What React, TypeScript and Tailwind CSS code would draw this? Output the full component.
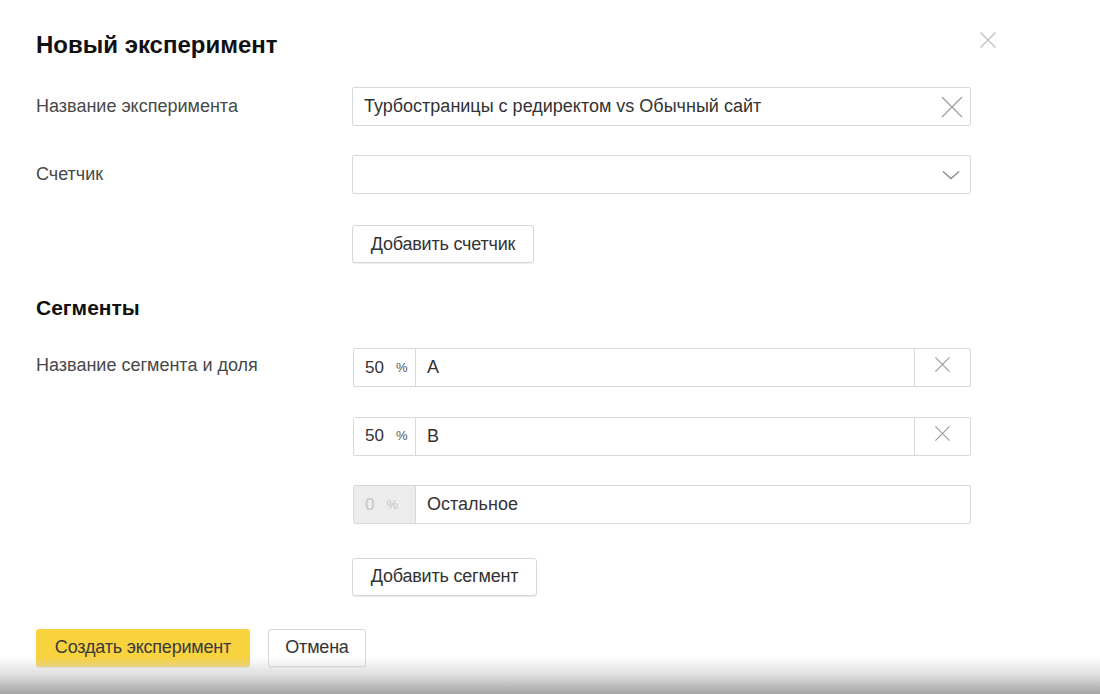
import React from "react";

function CrossIcon({ size, stroke = "#a6a6a6", width = 1.5 }: { size: number; stroke?: string; width?: number }) {
  return (
    <svg width={size} height={size} viewBox="0 0 24 24" fill="none">
      <path d="M2 2L22 22M22 2L2 22" stroke={stroke} strokeWidth={width} />
    </svg>
  );
}

function Chevron() {
  return (
    <svg width="18" height="10" viewBox="0 0 18 10" fill="none">
      <path d="M1 1.5L9 8.5L17 1.5" stroke="#8c8c8c" strokeWidth="1.4" />
    </svg>
  );
}

function Button({ children, className = "" }: { children: React.ReactNode; className?: string }) {
  return (
    <button
      type="button"
      className={`h-[38px] rounded-[3px] border border-[#d6d6d6] bg-white text-[18px] tracking-[-0.2px] text-[#333] shadow-[0_1px_1px_rgba(0,0,0,0.08)] ${className}`}
    >
      {children}
    </button>
  );
}

function SegmentRow({ share, name, removable = true, disabled = false }: { share: string; name: string; removable?: boolean; disabled?: boolean }) {
  return (
    <div className="flex h-[39px] w-[618px] border border-[#d9d9d9] rounded-[2px] bg-white">
      <div
        className={`flex w-[62px] items-center gap-[12px] border-r border-[#d9d9d9] pl-[11px] ${
          disabled ? "bg-[#ececec] text-[#c4c4c4]" : "text-[#333]"
        }`}
      >
        <span className="text-[17px]">{share}</span>
        <span className={`text-[13px] ${disabled ? "text-[#c4c4c4]" : "text-[#555]"}`}>%</span>
      </div>
      <div className="flex flex-1 items-center pl-[11px] text-[18px] text-[#333]">{name}</div>
      {removable ? (
        <div className="flex w-[56px] items-center justify-center border-l border-[#d9d9d9] pb-[6px]">
          <CrossIcon size={17} stroke="#9d9d9d" width={1.7} />
        </div>
      ) : null}
    </div>
  );
}

export default function App() {
  return (
    <div
      className="relative h-[694px] w-[1100px] overflow-hidden bg-white text-[#333]"
      style={{ fontFamily: '"Liberation Sans", Arial, sans-serif' }}
    >
      <div className="absolute right-[103px] top-[31px]">
        <CrossIcon size={18} stroke="#bdbdbd" width={1.6} />
      </div>

      <div className="flex flex-col pl-[36px] pt-[30px]">
        <h1 className="text-[24px] font-bold leading-[30px] text-[#111]">Новый эксперимент</h1>

        <div className="mt-[27px] flex items-center">
          <div className="w-[316px] text-[18px] text-[#484848]">Название эксперимента</div>
          <div className="flex h-[39px] w-[619px] items-center justify-between border border-[#d9d9d9] rounded-[2px] pl-[11px] pr-[6px]">
            <span className="text-[18px] text-[#333]">Турбостраницы с редиректом vs Обычный сайт</span>
            <CrossIcon size={24} stroke="#a9a9a9" width={1.6} />
          </div>
        </div>

        <div className="mt-[29px] flex items-start">
          <div className="w-[316px] pt-[6px] text-[18px] text-[#484848]">Счетчик</div>
          <div className="flex h-[39px] w-[619px] items-center justify-end border border-[#d9d9d9] rounded-[2px] pr-[10px]">
            <Chevron />
          </div>
        </div>

        <div className="mt-[31px] pl-[316px]">
          <Button className="w-[182px]">Добавить счетчик</Button>
        </div>

        <h2 className="mt-[31px] text-[21px] font-bold leading-[28px] text-[#111]">Сегменты</h2>

        <div className="mt-[26px] flex items-start">
          <div className="w-[317px] pt-[4px] text-[18px] text-[#484848]">Название сегмента и доля</div>
          <div className="flex flex-col gap-[29.5px]">
            <SegmentRow share="50" name="A" />
            <SegmentRow share="50" name="B" />
            <SegmentRow share="0" name="Остальное" removable={false} disabled />
            <div className="mt-[4px] -ml-[1px]">
              <Button className="w-[185px]">Добавить сегмент</Button>
            </div>
          </div>
        </div>

        <div className="mt-[33px] flex gap-[18px]">
          <button
            type="button"
            className="h-[38px] w-[214px] rounded-[3px] bg-[#f8d23f] text-[18px] tracking-[-0.2px] text-[#3a3a3a] shadow-[0_1px_1px_rgba(0,0,0,0.1)]"
          >
            Создать эксперимент
          </button>
          <Button className="w-[98px]">Отмена</Button>
        </div>
      </div>

      <div className="pointer-events-none absolute bottom-0 left-0 h-[37px] w-full bg-gradient-to-b from-white/0 via-[#d4d4d4]/80 to-[#a4a4a4]" />
    </div>
  );
}
